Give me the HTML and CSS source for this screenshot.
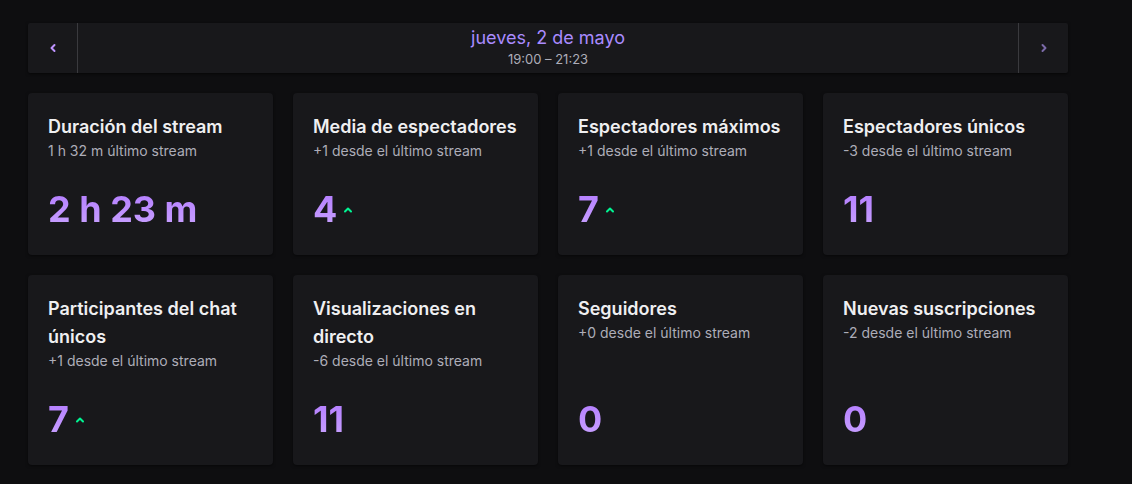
FILE: index.html
```html
<!DOCTYPE html>
<html lang="es">
<head>
<meta charset="utf-8">
<link rel="stylesheet" href="styles.css">
</head>
<body>
<div class="page">
  <div class="nav">
    <button class="nav-btn nav-prev" aria-label="Anterior">
      <svg width="8" height="10" viewBox="0 0 8 10"><path d="M5.5 2 L2.5 5 L5.5 8" fill="none" stroke="currentColor" stroke-width="2" stroke-linecap="round" stroke-linejoin="round"/></svg>
    </button>
    <div class="nav-center">
      <div class="nav-date">jueves, 2 de mayo</div>
      <div class="nav-time">19:00 – 21:23</div>
    </div>
    <button class="nav-btn nav-next" aria-label="Siguiente">
      <svg width="8" height="10" viewBox="0 0 8 10"><path d="M2.5 2 L5.5 5 L2.5 8" fill="none" stroke="currentColor" stroke-width="2" stroke-linecap="round" stroke-linejoin="round"/></svg>
    </button>
  </div>

  <div class="grid">
    <div class="card">
      <div class="title">Duración del stream</div>
      <div class="sub">1 h 32 m último stream</div>
      <div class="value"><span class="num">2 h 23 m</span></div>
    </div>
    <div class="card">
      <div class="title">Media de espectadores</div>
      <div class="sub">+1 desde el último stream</div>
      <div class="value"><span class="num">4</span><svg class="up" width="10" height="8" viewBox="0 0 10 8"><path d="M2 5.5 L5 2.5 L8 5.5" fill="none" stroke="currentColor" stroke-width="2" stroke-linecap="round" stroke-linejoin="round"/></svg></div>
    </div>
    <div class="card">
      <div class="title">Espectadores máximos</div>
      <div class="sub">+1 desde el último stream</div>
      <div class="value"><span class="num">7</span><svg class="up" width="10" height="8" viewBox="0 0 10 8"><path d="M2 5.5 L5 2.5 L8 5.5" fill="none" stroke="currentColor" stroke-width="2" stroke-linecap="round" stroke-linejoin="round"/></svg></div>
    </div>
    <div class="card">
      <div class="title">Espectadores únicos</div>
      <div class="sub">-3 desde el último stream</div>
      <div class="value"><span class="num">11</span></div>
    </div>

    <div class="card">
      <div class="title">Participantes del chat únicos</div>
      <div class="sub">+1 desde el último stream</div>
      <div class="value"><span class="num">7</span><svg class="up" width="10" height="8" viewBox="0 0 10 8"><path d="M2 5.5 L5 2.5 L8 5.5" fill="none" stroke="currentColor" stroke-width="2" stroke-linecap="round" stroke-linejoin="round"/></svg></div>
    </div>
    <div class="card">
      <div class="title">Visualizaciones en directo</div>
      <div class="sub">-6 desde el último stream</div>
      <div class="value"><span class="num">11</span></div>
    </div>
    <div class="card">
      <div class="title">Seguidores</div>
      <div class="sub">+0 desde el último stream</div>
      <div class="value"><span class="num">0</span></div>
    </div>
    <div class="card">
      <div class="title">Nuevas suscripciones</div>
      <div class="sub">-2 desde el último stream</div>
      <div class="value"><span class="num">0</span></div>
    </div>
  </div>
</div>
</body>
</html>
```

FILE: styles.css
```css
* { box-sizing: border-box; }

html, body {
  margin: 0;
  padding: 0;
  background: #0e0e10;
  font-family: Inter, "Noto Sans", "Liberation Sans", sans-serif;
  color: #efeff1;
}

.page {
  width: 1096px;
  padding: 23px 28px 20px 28px;
  display: flex;
  flex-direction: column;
  gap: 20px;
}

.nav {
  height: 50px;
  display: flex;
  align-items: stretch;
  background: #18181b;
  border-radius: 2px;
  box-shadow: 0 1px 3px rgba(0,0,0,0.6);
}

.nav-btn {
  width: 50px;
  flex: none;
  background: transparent;
  border: none;
  padding: 0;
  display: flex;
  align-items: center;
  justify-content: center;
  cursor: pointer;
}

.nav-prev {
  color: #bf94ff;
  border-right: 1px solid #3a3a3e;
}

.nav-next {
  color: #7b6aa8;
  border-left: 1px solid #3a3a3e;
}

.nav-center {
  flex: 1;
  display: flex;
  flex-direction: column;
  align-items: center;
  justify-content: flex-start;
  padding-top: 4px;
}

.nav-date {
  color: #a98bff;
  font-size: 18px;
  line-height: 22px;
}

.nav-time {
  color: #adadb8;
  font-size: 13px;
  line-height: 16px;
  margin-top: 2px;
}

.grid {
  display: grid;
  grid-template-columns: repeat(4, 245px);
  gap: 20px;
}

.card {
  background: #18181b;
  border-radius: 4px;
  padding: 20px 20px 26px 20px;
  display: flex;
  flex-direction: column;
  box-shadow: 0 1px 3px rgba(0,0,0,0.5);
}

.title {
  font-size: 18px;
  font-weight: 600;
  line-height: 28px;
  color: #efeff1;
}

.sub {
  font-size: 14px;
  line-height: 20px;
  color: #adadb8;
}

.value {
  margin-top: auto;
  padding-top: 28px;
  display: flex;
  align-items: center;
  gap: 6px;
  height: 68px;
}

.num {
  font-size: 36px;
  font-weight: 700;
  line-height: 40px;
  background: linear-gradient(180deg, #b37bff 0%, #c9a3ff 100%);
  -webkit-background-clip: text;
  background-clip: text;
  color: transparent;
}

.up {
  color: #00f593;
  margin-top: 2px;
}
```
